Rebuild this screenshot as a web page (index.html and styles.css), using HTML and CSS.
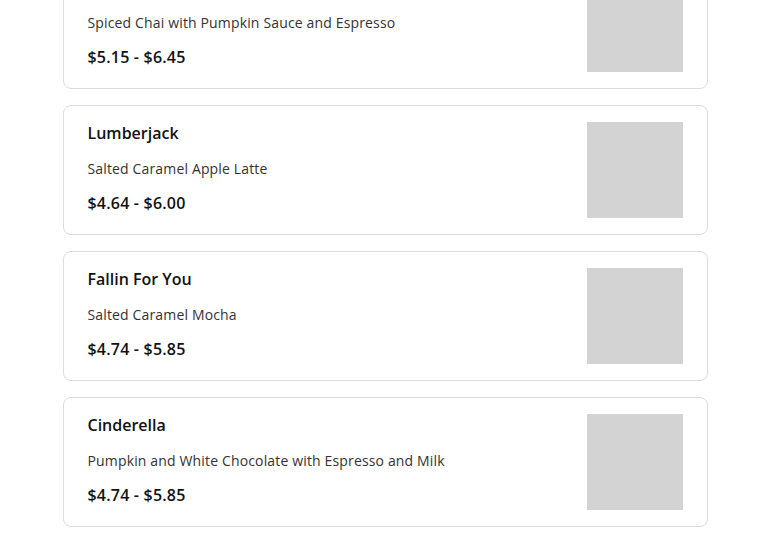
FILE: index.html
```html
<!DOCTYPE html>
<html>
<head>
<meta charset="utf-8">
<link rel="stylesheet" href="styles.css">
</head>
<body>
<main class="menu">
  <div class="card">
    <div class="info">
      <h3 class="name">Harvest Chai</h3>
      <p class="desc">Spiced Chai with Pumpkin Sauce and Espresso</p>
      <p class="price">$5.15 - $6.45</p>
    </div>
    <div class="thumb"></div>
  </div>
  <div class="card">
    <div class="info">
      <h3 class="name">Lumberjack</h3>
      <p class="desc">Salted Caramel Apple Latte</p>
      <p class="price">$4.64 - $6.00</p>
    </div>
    <div class="thumb"></div>
  </div>
  <div class="card">
    <div class="info">
      <h3 class="name">Fallin For You</h3>
      <p class="desc">Salted Caramel Mocha</p>
      <p class="price">$4.74 - $5.85</p>
    </div>
    <div class="thumb"></div>
  </div>
  <div class="card">
    <div class="info">
      <h3 class="name">Cinderella</h3>
      <p class="desc">Pumpkin and White Chocolate with Espresso and Milk</p>
      <p class="price">$4.74 - $5.85</p>
    </div>
    <div class="thumb"></div>
  </div>
</main>
</body>
</html>
```

FILE: styles.css
```css
html, body {
  margin: 0;
  padding: 0;
  background: #ffffff;
  overflow: hidden;
}
body {
  font-family: "Open Sans", Lato, sans-serif;
  color: #111;
}
.menu {
  width: 645px;
  margin: -41px auto 0;
  display: flex;
  flex-direction: column;
  gap: 16px;
}
.card {
  display: flex;
  justify-content: space-between;
  border: 1px solid #dcdcdc;
  border-radius: 8px;
  padding: 16px 24px;
  background: #fff;
}
.info {
  display: flex;
  flex-direction: column;
}
.name {
  margin: 0;
  font-size: 16px;
  line-height: 22px;
  font-weight: 600;
  color: #111;
}
.desc {
  margin: 15px 0 0;
  font-size: 14px;
  line-height: 20px;
  letter-spacing: 0.15px;
  color: #333;
  font-weight: 400;
}
.price {
  margin: 12px 0 0;
  font-size: 16px;
  line-height: 24px;
  letter-spacing: 0.2px;
  font-weight: 600;
  color: #111;
}
.thumb {
  width: 96px;
  height: 96px;
  background: #d3d3d3;
  flex-shrink: 0;
}
```
